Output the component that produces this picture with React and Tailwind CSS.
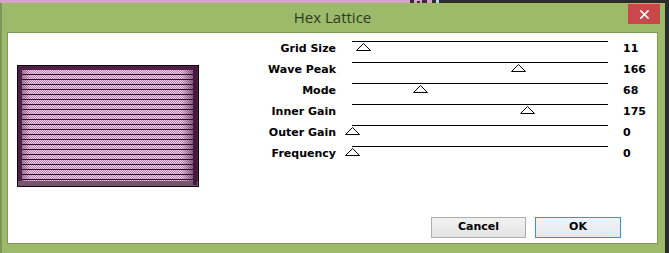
import React from "react";

const rows = [
  { label: "Grid Size", value: 11 },
  { label: "Wave Peak", value: 166 },
  { label: "Mode", value: 68 },
  { label: "Inner Gain", value: 175 },
  { label: "Outer Gain", value: 0 },
  { label: "Frequency", value: 0 },
];

const font = { fontFamily: '"DejaVu Sans", Verdana, sans-serif' };

function Preview() {
  return (
    <svg width="182" height="122" viewBox="0 0 182 122" className="block">
      <defs>
        <pattern id="stripe" width="2" height="5" patternUnits="userSpaceOnUse">
          <rect width="2" height="5" fill="#f3cdea" />
          <rect x="0" y="0" width="1" height="1" fill="#b684ae" />
          <rect x="1" y="1" width="1" height="1" fill="#b684ae" />
          <rect x="0" y="2" width="1" height="1" fill="#b684ae" />
          <rect x="1" y="3" width="1" height="1" fill="#b684ae" />
          <rect x="0" y="4" width="2" height="1" fill="#2e0c2a" />
        </pattern>
        <linearGradient id="shadeH" x1="0" x2="1" y1="0" y2="0">
          <stop offset="0" stopColor="#3a1234" stopOpacity="0.35" />
          <stop offset="0.05" stopColor="#3a1234" stopOpacity="0" />
          <stop offset="0.93" stopColor="#3a1234" stopOpacity="0" />
          <stop offset="1" stopColor="#3a1234" stopOpacity="0.55" />
        </linearGradient>
      </defs>
      <rect width="182" height="122" fill="#14060f" />
      <rect x="1" y="1" width="180" height="120" fill="#4e2046" />
      <rect x="1" y="116" width="180" height="5" fill="#76566e" />
      <rect x="5" y="5" width="172" height="111" fill="url(#stripe)" />
      <rect x="5" y="5" width="172" height="111" fill="url(#shadeH)" />
      <rect x="176" y="2" width="4" height="118" fill="#45193e" />
    </svg>
  );
}

function Thumb() {
  return (
    <svg width="15" height="8" viewBox="0 0 15 8" className="block">
      <polygon points="7.5,0.5 0.5,7.5 14.5,7.5" fill="#ffffff" stroke="#000000" strokeWidth="1" />
    </svg>
  );
}

function SliderRow({ label, value }) {
  return (
    <div className="flex h-[21px] items-start text-[11px] leading-[13px] font-bold text-black" style={font}>
      <div className="w-[138px] pr-[1px] text-right pt-[1px] whitespace-nowrap">{label}</div>
      <div className="relative w-[278px] h-[21px]">
        <div className="absolute left-[15px] top-0 w-[256px] h-px bg-black" />
        <div className="absolute top-[2px]" style={{ left: 15 + value - 7 }}>
          <Thumb />
        </div>
      </div>
      <div className="ml-[8px] pt-[1px]">{value}</div>
    </div>
  );
}

export default function App() {
  return (
    <div className="w-[669px] h-[253px] bg-[#2c2c2c] flex flex-col overflow-hidden">
      <div className="flex h-[3px] shrink-0">
        <div className="w-[408px] bg-[#d8a3c8]" />
        <div className="w-[24px] bg-[#d8a3c8] flex items-end">
          <div className="w-[4px] h-[3px] bg-[#3a2a34] ml-[2px]" />
          <div className="w-[3px] h-[2px] bg-[#3a2a34] ml-[3px]" />
          <div className="w-[5px] h-[3px] bg-[#3a2a34] ml-[2px]" />
        </div>
        <div className="w-[4px] bg-[#2c2c2c]" />
        <div className="w-[3px] bg-[#b8d4ea]" />
      </div>
      <div className="w-[665px] flex-1 bg-[#9cba6a] border-l-2 border-[#7b9758] flex flex-col">
        <div className="relative h-[29px] shrink-0 flex items-center justify-center">
          <span
            className="text-[15px] leading-[18px] text-[#2e3a22] pr-[2px] pb-[1px]"
            style={{ fontFamily: '"Open Sans", "Noto Sans", sans-serif' }}
          >
            Hex Lattice
          </span>
          <div className="absolute right-[5px] top-[1px] w-[32px] h-[20px] bg-[#c8484c] flex items-center justify-center">
            <svg width="9" height="9" viewBox="0 0 9 9">
              <path d="M1 1 L8 8 M8 1 L1 8" stroke="#ffffff" strokeWidth="1.6" strokeLinecap="square" />
            </svg>
          </div>
        </div>
        <div className="ml-[5px] w-[651px] h-[212px] border border-[#7b9a55] bg-white flex flex-col">
          <div className="flex flex-1">
            <div className="ml-[9px] mt-[32px]">
              <Preview />
            </div>
            <div className="mt-[8px] flex flex-col">
              {rows.map((r) => (
                <SliderRow key={r.label} label={r.label} value={r.value} />
              ))}
            </div>
          </div>
          <div className="flex justify-end gap-[9px] pr-[36px] pb-[5px]">
            <button
              className="w-[95px] h-[21px] border border-[#adadad] bg-gradient-to-b from-[#f2f2f2] to-[#e3e3e3] text-[11px] font-bold text-black flex items-center justify-center"
              style={font}
            >
              Cancel
            </button>
            <button
              className="w-[86px] h-[21px] border border-[#3f8fd6] bg-gradient-to-b from-[#f2f4f6] to-[#e4e8ec] text-[11px] font-bold text-black flex items-center justify-center"
              style={font}
            >
              OK
            </button>
          </div>
        </div>
      </div>
    </div>
  );
}
